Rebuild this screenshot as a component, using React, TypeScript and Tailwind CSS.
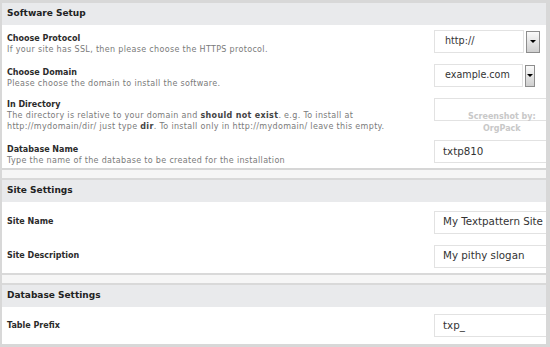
import type { ReactNode } from "react";

function Header({ title }: { title: string }) {
  return (
    <div className="flex h-[22px] items-center bg-[#e9eaec] pl-[5px] text-[9px] font-bold text-[#222]">
      {title}
    </div>
  );
}

function TextBox({ value }: { value: string }) {
  return (
    <div className="flex h-[23px] w-[150px] shrink-0 items-center border border-[#e2e2e2] bg-white pl-[8px] text-[10.3px] text-[#333]">
      {value}
    </div>
  );
}

function Select({ value, width, btn }: { value: string; width: number; btn: number }) {
  return (
    <div className="flex items-center gap-[2px]">
      <div
        className="flex h-[23px] items-center border border-[#e2e2e2] bg-white pl-[10px] text-[9.6px] text-[#333]"
        style={{ width }}
      >
        {value}
      </div>
      <div
        className="flex h-[22px] items-center justify-center border border-[#8d8d8d] bg-gradient-to-b from-[#fafafa] to-[#cfcfcf]"
        style={{ width: btn }}
      >
        <div className="h-0 w-0 border-x-[3px] border-t-[3px] border-x-transparent border-t-black" />
      </div>
    </div>
  );
}

function Row(props: { h: string; pt: string; label: string; desc?: ReactNode; children: ReactNode }) {
  return (
    <div className={`flex ${props.h}`}>
      <div className={`flex-1 pl-[5px] ${props.pt}`}>
        <div className="text-[8px] leading-[10px] font-bold text-[#2b2b2b]">{props.label}</div>
        {props.desc && (
          <div className="text-[8px] leading-[11px] tracking-[0.33px] text-[#7a7a7a]">{props.desc}</div>
        )}
      </div>
      <div className="w-[112px] shrink-0 pt-[5px]">{props.children}</div>
    </div>
  );
}

function SimpleRow({ h, label, value }: { h: string; label: string; value: string }) {
  return (
    <div className={`flex items-center ${h}`}>
      <div className="flex-1 pl-[5px] text-[8px] font-bold text-[#2b2b2b]">{label}</div>
      <div className="w-[112px] shrink-0">
        <TextBox value={value} />
      </div>
    </div>
  );
}

export default function App() {
  return (
    <div className="relative h-[347px] w-[550px] overflow-hidden bg-[#d8d8d8] pl-[2px] pr-[4px] pt-[3px] font-['DejaVu_Sans',Verdana,sans-serif]">
      <div className="flex flex-col overflow-hidden bg-[#f6f6f6]">
        <div className="border-b-2 border-[#d6d6d6]">
          <Header title="Software Setup" />
          <div className="bg-white">
            <Row h="h-[34px]" pt="pt-[9px]" label="Choose Protocol" desc="If your site has SSL, then please choose the HTTPS protocol.">
              <Select value="http://" width={90} btn={14} />
            </Row>
            <Row h="h-[34px]" pt="pt-[9px]" label="Choose Domain" desc="Please choose the domain to install the software.">
              <Select value="example.com" width={89} btn={10} />
            </Row>
            <Row
              h="h-[40px]"
              pt="pt-[7px]"
              label="In Directory"
              desc={
                <>
                  The directory is relative to your domain and <b className="text-[#444]">should not exist</b>. e.g. To install at
                  <br />
                  http://mydomain/dir/ just type <b className="text-[#444]">dir</b>. To install only in http://mydomain/ leave this empty.
                </>
              }
            >
              <TextBox value="" />
            </Row>
            <Row h="h-[35px]" pt="pt-[12px]" label="Database Name" desc="Type the name of the database to be created for the installation">
              <div className="pt-[2px]">
                <TextBox value="txtp810" />
              </div>
            </Row>
          </div>
        </div>

        <div className="mt-[8px] border-y-2 border-[#d9d9d9]">
          <Header title="Site Settings" />
          <div className="bg-white pt-[3px]">
            <SimpleRow h="h-[34px]" label="Site Name" value="My Textpattern Site" />
            <SimpleRow h="h-[34px]" label="Site Description" value="My pithy slogan" />
          </div>
        </div>

        <div className="mt-[8px] border-t-2 border-[#d9d9d9]">
          <Header title="Database Settings" />
          <div className="bg-white">
            <SimpleRow h="h-[37px]" label="Table Prefix" value="txp_" />
          </div>
        </div>
      </div>

      <div className="absolute left-[468px] top-[111px] text-center text-[8px] leading-[12px] font-bold text-[#c8c8c8]">
        Screenshot by:
        <br />
        OrgPack
      </div>
    </div>
  );
}
